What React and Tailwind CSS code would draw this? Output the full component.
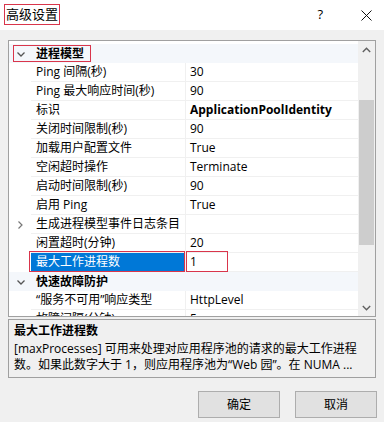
import React from "react";

const FONT = { fontFamily: '"Open Sans", "Noto Sans CJK SC", sans-serif' };

const Chevron = ({ dir }) =>
  dir === "down" ? (
    <svg width="10" height="10" viewBox="0 0 10 10">
      <path d="M1.5 3.5 L5 7 L8.5 3.5" fill="none" stroke="#555" strokeWidth="1.3" />
    </svg>
  ) : (
    <svg width="10" height="10" viewBox="0 0 10 10">
      <path d="M2.5 1.5 L6 5 L2.5 8.5" fill="none" stroke="#777" strokeWidth="1.2" />
    </svg>
  );

const rows = [
  { type: "cat", label: "进程模型", redbox: true },
  { label: "Ping 间隔(秒)", value: "30" },
  { label: "Ping 最大响应时间(秒)", value: "90" },
  { label: "标识", value: "ApplicationPoolIdentity", bold: true },
  { label: "关闭时间限制(秒)", value: "90" },
  { label: "加载用户配置文件", value: "True" },
  { label: "空闲超时操作", value: "Terminate" },
  { label: "启动时间限制(秒)", value: "90" },
  { label: "启用 Ping", value: "True" },
  { label: "生成进程模型事件日志条目", value: "", expand: true },
  { label: "闲置超时(分钟)", value: "20" },
  { label: "最大工作进程数", value: "1", selected: true },
  { type: "cat", label: "快速故障防护" },
  { label: "“服务不可用”响应类型", value: "HttpLevel" },
  { label: "故障间隔(分钟)", value: "5" },
];

function Row({ r }) {
  if (r.type === "cat") {
    return (
      <div className="relative flex h-[19px] items-center bg-[#f4f7fb]">
        {r.redbox && (
          <div className="absolute left-[4px] w-[78px] top-[1px] bottom-[1px] border border-[#d9354b]" />
        )}
        <div className="flex w-[22px] shrink-0 items-center justify-start pl-[7px]">
          <Chevron dir="down" />
        </div>
        <span className="pl-[5px] text-[12px] font-bold text-black">{r.label}</span>
      </div>
    );
  }
  return (
    <div className="flex h-[19px] items-stretch">
      <div className="flex w-[22px] shrink-0 items-center justify-start pl-[7px]">
        {r.expand && <Chevron dir="right" />}
      </div>
      <div
        className={
          "relative flex w-[155px] shrink-0 items-center border-b border-r border-[#f0f0f0] pl-[5px] " +
          (r.selected ? "bg-[#0078d7] text-white" : "text-black")
        }
      >
        {r.selected && (
          <div className="absolute left-[-2px] right-[0px] top-[-2px] bottom-[-1px] border border-[#d9354b]" />
        )}
        <span className="whitespace-nowrap text-[12px]">{r.label}</span>
      </div>
      <div className="relative flex flex-1 items-center border-b border-[#f0f0f0] pl-[4px]">
        {r.selected && (
          <div className="absolute left-[0px] w-[42px] top-[-2px] bottom-[-1px] border border-[#d9354b]" />
        )}
        <span className={"whitespace-nowrap text-[12px] text-black " + (r.bold ? "font-bold" : "")}>
          {r.value}
        </span>
      </div>
    </div>
  );
}

export default function App() {
  return (
    <div className="relative h-[422px] w-[384px] overflow-hidden bg-[#f0f0f0]" style={FONT}>
      {/* title bar */}
      <div className="flex h-[30px] items-center bg-white">
        <div className="ml-[4px] mt-[-2px] border border-[#d9354b] px-[1px] text-[13px] leading-[19px] text-black">
          高级设置
        </div>
        <div className="flex-1" />
        <span className="mr-[38px] text-[13px] text-black">?</span>
        <svg width="11" height="11" viewBox="0 0 11 11" className="mr-[12px]">
          <path d="M0.5 0.5 L10.5 10.5 M10.5 0.5 L0.5 10.5" stroke="#111" strokeWidth="1" />
        </svg>
      </div>

      <div className="px-[8px] pt-[10px]">
        {/* property grid */}
        <div className="flex h-[277px] border border-[#a0a0a0] bg-white">
          <div className="flex-1 overflow-hidden pt-[3px]">
            {rows.map((r, i) => (
              <Row key={i} r={r} />
            ))}
          </div>
          <div className="flex w-[17px] flex-col bg-[#f0f0f0]">
            <div className="flex h-[17px] items-center justify-center">
              <svg width="9" height="6" viewBox="0 0 9 6">
                <path d="M0.8 5 L4.5 1.3 L8.2 5" fill="none" stroke="#606060" strokeWidth="1.4" />
              </svg>
            </div>
            <div className="flex-1">
              <div className="mx-[1px] mt-[42px] h-[145px] bg-[#cdcdcd]" />
            </div>
            <div className="flex h-[17px] items-center justify-center">
              <svg width="9" height="6" viewBox="0 0 9 6">
                <path d="M0.8 1 L4.5 4.7 L8.2 1" fill="none" stroke="#606060" strokeWidth="1.4" />
              </svg>
            </div>
          </div>
        </div>

        {/* description */}
        <div className="mt-[2px] h-[59px] border border-[#a0a0a0] bg-[#f0f0f0] px-[5px] pt-[3px]">
          <div className="text-[12px] font-bold leading-[16px] text-black">最大工作进程数</div>
          <div className="mt-[2px] whitespace-nowrap text-[12px] leading-[16px] text-black">
            [maxProcesses] 可用来处理对应用程序池的请求的最大工作进程
          </div>
          <div className="whitespace-nowrap text-[12px] leading-[16px] text-black">
            数。如果此数字大于 1，则应用程序池为“Web 园”。在 NUMA ...
          </div>
        </div>

        {/* buttons */}
        <div className="mt-[13px] flex justify-end gap-[15px]">
          <button className="flex h-[27px] w-[82px] items-center justify-center border border-[#adadad] bg-[#e1e1e1] text-[12px] text-black">
            确定
          </button>
          <button className="mr-[-1px] flex h-[27px] w-[82px] items-center justify-center border border-[#adadad] bg-[#e1e1e1] text-[12px] text-black">
            取消
          </button>
        </div>
      </div>
    </div>
  );
}
